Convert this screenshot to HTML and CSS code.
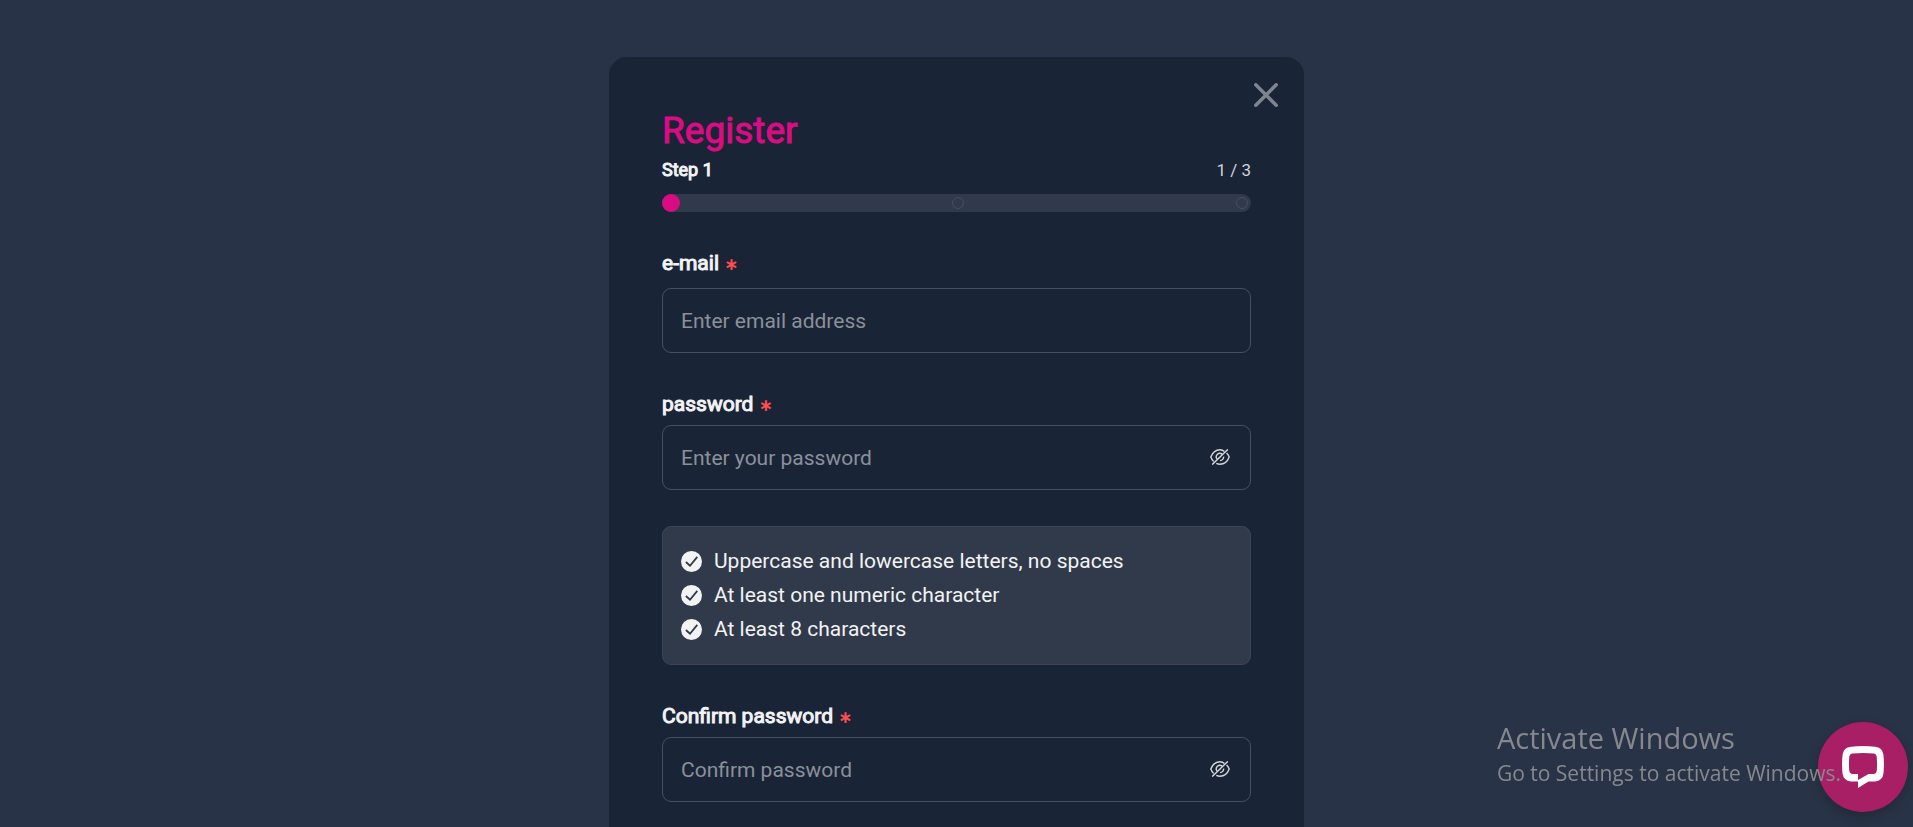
FILE: index.html
```
<!DOCTYPE html>
<html lang="en">
<head>
    <meta charset="UTF-8">
    <meta name="viewport" content="width=device-width, initial-scale=1.0">
    <title>Register</title>
    <link rel="stylesheet" href="styles.css">
</head>
<body>
    <div class="overlay">
        <div class="modal">
            <button type="button" class="close-btn" aria-label="Close">
                <svg viewBox="0 0 24 24" width="24" height="24"><path d="M1.8 1.8l20.4 20.4M22.2 1.8L1.8 22.2"/></svg>
            </button>

            <h1>Register</h1>
            <div class="step-info">
                <span class="step-name">Step 1</span>
                <span class="step-count">1 / 3</span>
            </div>
            <div class="progress">
                <span class="dot active"></span>
                <span class="dot"></span>
                <span class="dot"></span>
            </div>

            <form>
                <div class="form-group email-group">
                    <label for="email">e-mail <span class="required">∗</span></label>
                    <input type="email" id="email" name="email" placeholder="Enter email address">
                </div>

                <div class="form-group">
                    <label for="password">password <span class="required">∗</span></label>
                    <div class="input-wrap">
                        <input type="password" id="password" name="password" placeholder="Enter your password">
                        <button type="button" class="eye-btn" aria-label="Show password">
                            <svg viewBox="0 0 20 16" width="20" height="16">
                                <path d="M14.4 2.6C13 1.2 11.6 .8 10 .8C5.6 .8 2.4 4 .8 8C1.4 9.7 2.4 11.2 3.7 12.4M16.6 4C17.8 5.1 18.7 6.5 19.2 8C17.6 12.2 14.4 15.2 10 15.2C8.6 15.2 7.4 14.9 6.3 14.4"/>
                                <path d="M12 4.9A3.7 3.7 0 0 0 6.8 9.9M13.6 7.6A3.7 3.7 0 0 1 10 11.6M2.2 15.6L17.8 .4"/>
                            </svg>
                        </button>
                    </div>
                </div>

                <ul class="rules">
                    <li>
                        <svg viewBox="0 0 21 21" width="21" height="21"><circle cx="10.5" cy="10.5" r="10.5"/><path d="M4.9 11L9 14.7L16.3 5.9"/></svg>
                        Uppercase and lowercase letters, no spaces
                    </li>
                    <li>
                        <svg viewBox="0 0 21 21" width="21" height="21"><circle cx="10.5" cy="10.5" r="10.5"/><path d="M4.9 11L9 14.7L16.3 5.9"/></svg>
                        At least one numeric character
                    </li>
                    <li>
                        <svg viewBox="0 0 21 21" width="21" height="21"><circle cx="10.5" cy="10.5" r="10.5"/><path d="M4.9 11L9 14.7L16.3 5.9"/></svg>
                        At least 8 characters
                    </li>
                </ul>

                <div class="form-group">
                    <label for="confirm">Confirm password <span class="required">∗</span></label>
                    <div class="input-wrap">
                        <input type="password" id="confirm" name="confirm" placeholder="Confirm password">
                        <button type="button" class="eye-btn" aria-label="Show password">
                            <svg viewBox="0 0 20 16" width="20" height="16">
                                <path d="M14.4 2.6C13 1.2 11.6 .8 10 .8C5.6 .8 2.4 4 .8 8C1.4 9.7 2.4 11.2 3.7 12.4M16.6 4C17.8 5.1 18.7 6.5 19.2 8C17.6 12.2 14.4 15.2 10 15.2C8.6 15.2 7.4 14.9 6.3 14.4"/>
                                <path d="M12 4.9A3.7 3.7 0 0 0 6.8 9.9M13.6 7.6A3.7 3.7 0 0 1 10 11.6M2.2 15.6L17.8 .4"/>
                            </svg>
                        </button>
                    </div>
                </div>
            </form>
        </div>
    </div>

    <button type="button" class="chat-btn" aria-label="Open chat">
        <svg viewBox="0 0 42 42" width="42" height="42">
            <path d="M9 .7Q21 -.6 33 .7Q40.500 1.500 41.400 8.500Q42.500 18 41.400 28Q40.500 34.500 33 35.500H26.500L16 42V35.500H9Q1.500 34.500 .6 28Q-.5 18 .6 8.500Q1.500 1.500 9 .7ZM10 7.500Q7.600 7.800 7.300 10.500Q6.600 18 7.300 25Q7.600 27.700 10 28H16V34L26.500 28H32Q34.400 27.700 34.700 25Q35.400 18 34.700 10.500Q34.400 7.800 32 7.500Q21 6.500 10 7.500Z"/>
        </svg>
    </button>

    <div class="watermark">
        <p class="watermark-title">Activate Windows</p>
        <p class="watermark-text">Go to Settings to activate Windows.</p>
    </div>
</body>
</html>
```
FILE: styles.css
```
:root {
    --primary: #da0c81;
    --page: #293347;
    --card: #1a2437;
    --panel: #303a4b;
    --border: #465060;
    --light: #f3f3f4;
    --muted: #8b9099;
    --danger: #ff4d4f;
}

* { box-sizing: border-box; margin: 0; padding: 0; }

body {
    background: var(--page);
    font-family: Roboto, sans-serif;
    font-size: 21px;
    color: var(--light);
}

button {
    background: none;
    border: none;
    cursor: pointer;
}

svg {
    display: block;
    fill: none;
}

.overlay {
    position: fixed;
    inset: 0;
    overflow-y: auto;
    scrollbar-width: none;
    padding: 57px 16px;
}

.modal {
    position: relative;
    width: 100%;
    max-width: 695px;
    margin: 0 auto;
    padding: 52px 53px;
    background: var(--card);
    border-radius: 18px;
}

.close-btn {
    position: absolute;
    top: 26px;
    right: 26px;
}

.close-btn svg {
    stroke: #7f8590;
    stroke-width: 3.5;
    stroke-linecap: round;
}

h1 {
    font-size: 37px;
    font-weight: 400;
    line-height: 44px;
    color: var(--primary);
    -webkit-text-stroke: 1px var(--primary);
}

.step-info {
    display: flex;
    justify-content: space-between;
    align-items: center;
    line-height: 34px;
}

.step-name {
    font-size: 18px;
    -webkit-text-stroke: 1px var(--light);
}

.step-count {
    font-size: 17px;
    color: #d1d3d7;
}

.progress {
    display: flex;
    justify-content: space-between;
    align-items: center;
    height: 18px;
    margin: 7px 0 35px;
    padding-right: 3px;
    background: var(--panel);
    border-radius: 9px;
}

.dot {
    width: 12px;
    height: 12px;
    border: 1px solid var(--border);
    border-radius: 50%;
}

.dot.active {
    width: 18px;
    height: 18px;
    background: var(--primary);
    border: none;
}

.form-group label {
    display: block;
    margin-bottom: 5px;
    line-height: 32px;
    -webkit-text-stroke: 1px var(--light);
}

.email-group {
    margin-bottom: 35px;
}

.form-group.email-group label {
    margin-bottom: 9px;
}

.required {
    font-family: "DejaVu Sans", sans-serif;
    font-size: 17px;
    font-weight: bold;
    line-height: 1;
    color: var(--danger);
    -webkit-text-stroke: 0;
}

.input-wrap {
    position: relative;
}

input {
    display: block;
    width: 100%;
    height: 65px;
    padding: 0 18px;
    background: transparent;
    border: 1px solid var(--border);
    border-radius: 9px;
    font-family: inherit;
    font-size: 21px;
    color: var(--light);
}

.input-wrap input {
    padding-right: 56px;
}

input::placeholder {
    color: var(--muted);
    opacity: 1;
}

input:focus {
    outline: none;
    border-color: var(--primary);
}

.eye-btn {
    position: absolute;
    top: 24px;
    right: 21px;
}

.eye-btn svg {
    stroke: #d5d7da;
    stroke-width: 1.4;
}

.rules {
    margin: 36px 0 35px;
    padding: 17px 18px 18px;
    min-height: 139px;
    list-style: none;
    background: var(--panel);
    border: 1px solid #3b4556;
    border-radius: 9px;
}

.rules li {
    display: flex;
    align-items: center;
    gap: 12px;
    line-height: 34px;
}

.rules circle {
    fill: var(--light);
}

.rules path {
    stroke: var(--panel);
    stroke-width: 1.8;
}

.chat-btn {
    position: fixed;
    right: 5px;
    bottom: 15px;
    display: flex;
    justify-content: center;
    align-items: center;
    width: 90px;
    height: 90px;
    background: #a81f66;
    border-radius: 50%;
    box-shadow: 0 4px 12px rgba(0, 0, 0, 0.2);
}

.chat-btn svg {
    fill: #fff;
    fill-rule: evenodd;
}

.watermark {
    position: fixed;
    right: 72px;
    bottom: 38px;
    font-family: "Open Sans", sans-serif;
    color: #86888e;
    pointer-events: none;
}

.watermark-title {
    font-size: 29px;
    line-height: 38px;
}

.watermark-text {
    font-size: 21px;
    line-height: 32px;
}
```
